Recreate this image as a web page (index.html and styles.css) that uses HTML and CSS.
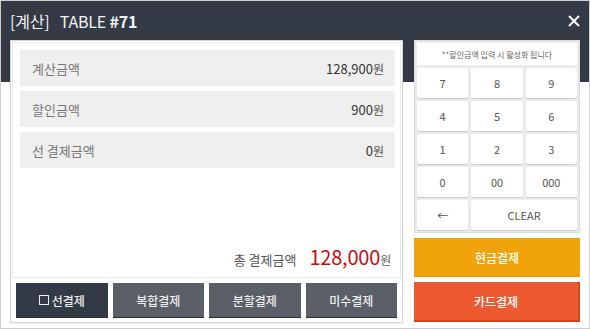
FILE: index.html
```
<!DOCTYPE html>
<html>
<head>
    <title>계산</title>
    <link rel="stylesheet" href="styles.css">
</head>
<body>
    <div class="pos-modal">
        <div class="modal-header">
            <h2><span class="tag">[계산]</span> TABLE <strong>#71</strong></h2>
            <svg class="close-icon" width="12" height="12" viewBox="0 0 12 12">
                <path d="M1 1 L11 11 M11 1 L1 11" stroke="#fff" stroke-width="2" fill="none"/>
            </svg>
        </div>

        <div class="modal-body">
            <div class="summary-card">
                <div class="summary-box">
                    <div class="amount-row">
                        <span class="label">계산금액</span>
                        <span class="value">128,900<small>원</small></span>
                    </div>
                    <div class="amount-row">
                        <span class="label">할인금액</span>
                        <span class="value">900<small>원</small></span>
                    </div>
                    <div class="amount-row">
                        <span class="label">선 결제금액</span>
                        <span class="value">0<small>원</small></span>
                    </div>
                    <div class="total-row">
                        <span class="total-label">총 결제금액</span>
                        <span class="total-value">128,000<small>원</small></span>
                    </div>
                </div>
                <div class="pay-options">
                    <button class="option-btn active"><span class="check"></span>선결제</button>
                    <button class="option-btn">복합결제</button>
                    <button class="option-btn">분할결제</button>
                    <button class="option-btn">미수결제</button>
                </div>
            </div>

            <div class="side-panel">
                <div class="keypad">
                    <div class="keypad-notice">**할인금액 입력 시 활성화 됩니다</div>
                    <button class="key">7</button>
                    <button class="key">8</button>
                    <button class="key">9</button>
                    <button class="key">4</button>
                    <button class="key">5</button>
                    <button class="key">6</button>
                    <button class="key">1</button>
                    <button class="key">2</button>
                    <button class="key">3</button>
                    <button class="key">0</button>
                    <button class="key">00</button>
                    <button class="key">000</button>
                    <button class="key">&larr;</button>
                    <button class="key wide">CLEAR</button>
                </div>
                <button class="pay-btn cash">현금결제</button>
                <button class="pay-btn card">카드결제</button>
            </div>
        </div>
    </div>
</body>
</html>
```

FILE: styles.css
```
* {
    margin: 0;
    padding: 0;
    box-sizing: border-box;
    font-family: 'Noto Sans CJK KR', 'Noto Sans', sans-serif;
}

body {
    background: #fff;
}

.pos-modal {
    width: 590px;
    height: 329px;
    border: 1px solid #cfcfcf;
    background: linear-gradient(#343a45 0, #343a45 81px, #fff 81px);
}

.modal-header {
    height: 39px;
    display: flex;
    align-items: center;
    justify-content: space-between;
    padding: 0 9px 0 9px;
}

.modal-header h2 {
    color: #f2f2f2;
    font-size: 16px;
    font-weight: 400;
    letter-spacing: -0.2px;
}

.modal-header .tag {
    margin-right: 7px;
}

.modal-header strong {
    font-weight: 700;
}

.close-icon {
    display: block;
}

.modal-body {
    display: flex;
    gap: 11px;
    padding: 0 9px;
}

/* left side */
.summary-card {
    width: 393px;
    height: 283px;
    background: #fff;
    border: 1px solid #d4d4d4;
    padding: 1px 1px 4px 1px;
    display: flex;
    flex-direction: column;
    box-shadow: 0 1px 2px rgba(0, 0, 0, 0.08);
}

.summary-box {
    flex: 1;
    border: 1px solid #ebebeb;
    padding: 7px 5px 6px 7px;
    display: flex;
    flex-direction: column;
    gap: 5px;
}

.amount-row {
    height: 36px;
    background: #efefef;
    display: flex;
    align-items: center;
    justify-content: space-between;
    padding: 0 11px 0 12px;
    font-size: 13px;
}

.amount-row .label {
    color: #777;
}

.amount-row .value {
    color: #333;
}

.amount-row small {
    font-size: 12px;
    color: #555;
}

.total-row {
    margin-top: auto;
    display: flex;
    justify-content: flex-end;
    align-items: baseline;
    padding-right: 4px;
}

.total-label {
    color: #555;
    font-size: 13px;
    margin-right: 13px;
}

.total-value {
    color: #cc0a0a;
    font-size: 20px;
    font-weight: 400;
    letter-spacing: -0.2px;
}

.total-value small {
    font-size: 12px;
    color: #666;
    font-weight: 400;
}

.pay-options {
    display: flex;
    gap: 5px;
    margin: 5px 4px 0 4px;
}

.option-btn {
    flex: 1;
    height: 35px;
    border: none;
    border-bottom: 1px solid #2a2f38;
    background: #5b5f67;
    color: #eee;
    font-size: 12px;
    font-weight: 500;
    display: flex;
    align-items: center;
    justify-content: center;
}

.option-btn.active {
    background: #343a45;
}

.check {
    width: 10px;
    height: 10px;
    border: 1px solid #eee;
    margin-right: 3px;
}

/* right side */
.side-panel {
    width: 166px;
    display: flex;
    flex-direction: column;
    gap: 5px;
}

.keypad {
    background: #ececec;
    border: 1px solid #dcdcdc;
    padding: 2px;
    display: grid;
    grid-template-columns: repeat(3, 1fr);
    grid-template-rows: 22px repeat(5, 30px);
    gap: 3px;
}

.keypad-notice {
    grid-column: span 3;
    background: #fff;
    color: #666;
    font-size: 8px;
    display: flex;
    align-items: center;
    justify-content: center;
}

.key {
    background: #fff;
    border: none;
    border-radius: 2px;
    box-shadow: 0 1px 1px rgba(0, 0, 0, 0.15);
    color: #555;
    font-size: 11px;
}

.key.wide {
    grid-column: span 2;
    font-size: 11px;
}

.pay-btn {
    height: 40px;
    border: none;
    color: #fff;
    font-size: 12px;
    font-weight: 500;
}

.pay-btn.cash {
    background: #f0a30a;
    height: 39px;
    border-bottom: 1px solid #e09500;
}

.pay-btn.card {
    background: #ee5a2f;
    border-right: 2px solid #d9441b;
    border-bottom: 2px solid #d9441b;
}
```
